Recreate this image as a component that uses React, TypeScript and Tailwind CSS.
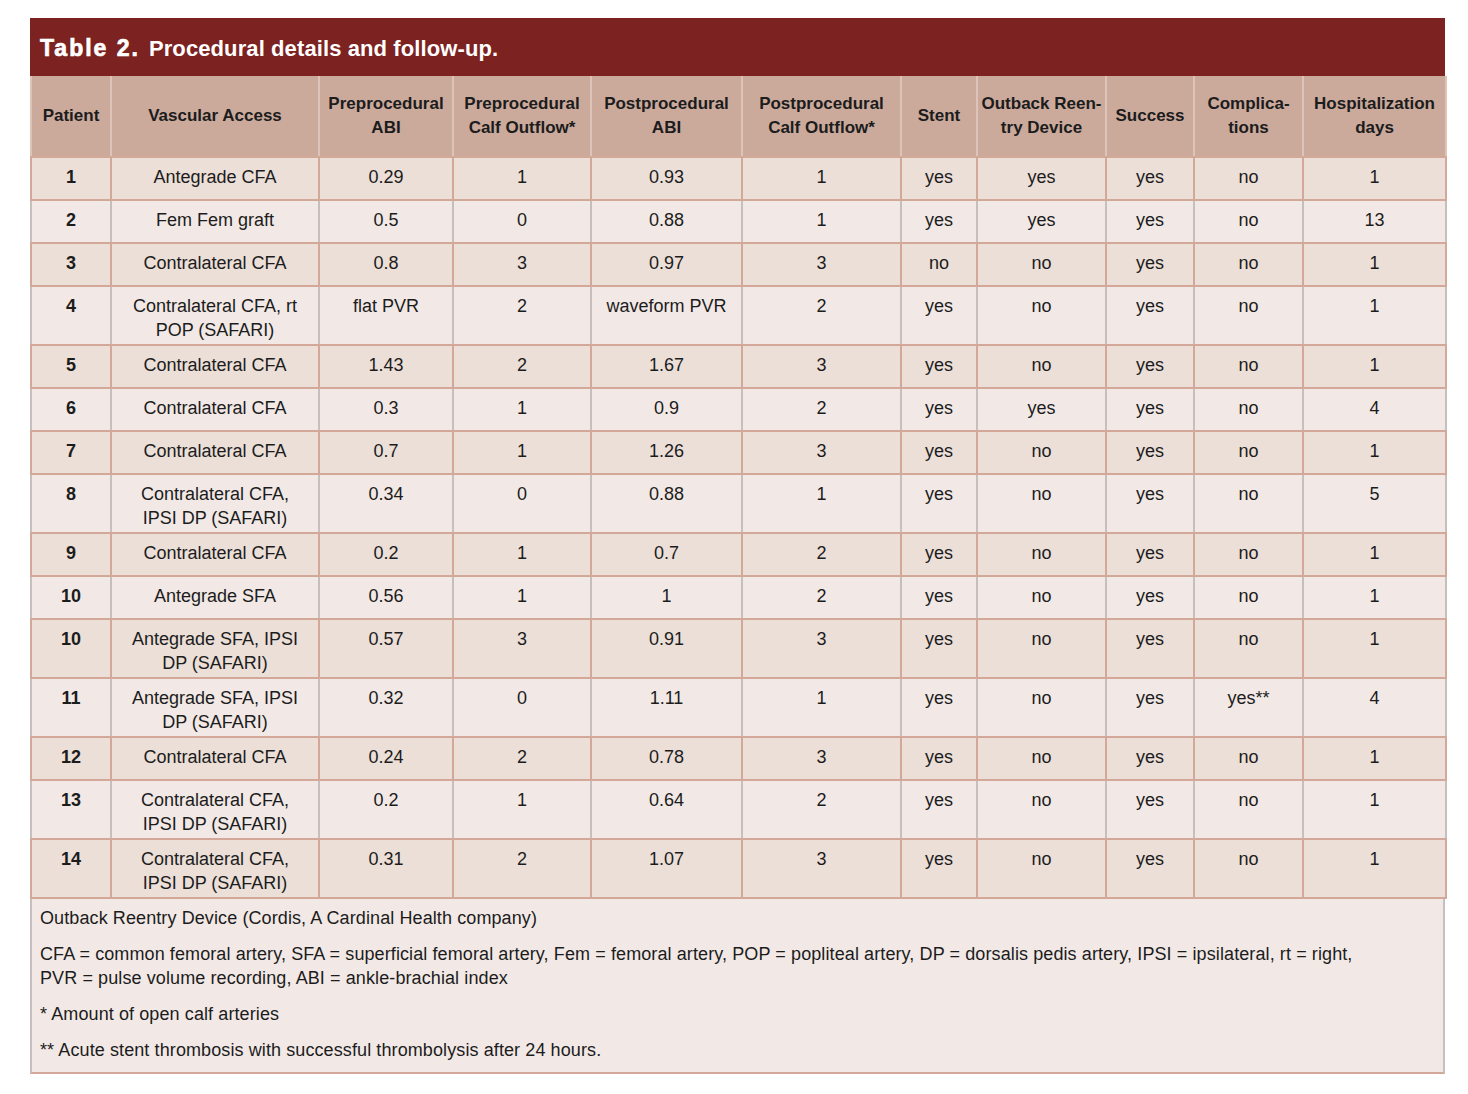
import React from "react";

type Row = {
  patient: string;
  access: string;
  preAbi: string;
  preCalf: string;
  postAbi: string;
  postCalf: string;
  stent: string;
  outback: string;
  success: string;
  comp: string;
  days: string;
  tall?: boolean;
};

const rows: Row[] = [
  { patient: "1", access: "Antegrade CFA", preAbi: "0.29", preCalf: "1", postAbi: "0.93", postCalf: "1", stent: "yes", outback: "yes", success: "yes", comp: "no", days: "1" },
  { patient: "2", access: "Fem Fem graft", preAbi: "0.5", preCalf: "0", postAbi: "0.88", postCalf: "1", stent: "yes", outback: "yes", success: "yes", comp: "no", days: "13" },
  { patient: "3", access: "Contralateral CFA", preAbi: "0.8", preCalf: "3", postAbi: "0.97", postCalf: "3", stent: "no", outback: "no", success: "yes", comp: "no", days: "1" },
  { patient: "4", access: "Contralateral CFA, rt\nPOP (SAFARI)", preAbi: "flat PVR", preCalf: "2", postAbi: "waveform PVR", postCalf: "2", stent: "yes", outback: "no", success: "yes", comp: "no", days: "1", tall: true },
  { patient: "5", access: "Contralateral CFA", preAbi: "1.43", preCalf: "2", postAbi: "1.67", postCalf: "3", stent: "yes", outback: "no", success: "yes", comp: "no", days: "1" },
  { patient: "6", access: "Contralateral CFA", preAbi: "0.3", preCalf: "1", postAbi: "0.9", postCalf: "2", stent: "yes", outback: "yes", success: "yes", comp: "no", days: "4" },
  { patient: "7", access: "Contralateral CFA", preAbi: "0.7", preCalf: "1", postAbi: "1.26", postCalf: "3", stent: "yes", outback: "no", success: "yes", comp: "no", days: "1" },
  { patient: "8", access: "Contralateral CFA,\nIPSI DP (SAFARI)", preAbi: "0.34", preCalf: "0", postAbi: "0.88", postCalf: "1", stent: "yes", outback: "no", success: "yes", comp: "no", days: "5", tall: true },
  { patient: "9", access: "Contralateral CFA", preAbi: "0.2", preCalf: "1", postAbi: "0.7", postCalf: "2", stent: "yes", outback: "no", success: "yes", comp: "no", days: "1" },
  { patient: "10", access: "Antegrade SFA", preAbi: "0.56", preCalf: "1", postAbi: "1", postCalf: "2", stent: "yes", outback: "no", success: "yes", comp: "no", days: "1" },
  { patient: "10", access: "Antegrade SFA, IPSI\nDP (SAFARI)", preAbi: "0.57", preCalf: "3", postAbi: "0.91", postCalf: "3", stent: "yes", outback: "no", success: "yes", comp: "no", days: "1", tall: true },
  { patient: "11", access: "Antegrade SFA, IPSI\nDP (SAFARI)", preAbi: "0.32", preCalf: "0", postAbi: "1.11", postCalf: "1", stent: "yes", outback: "no", success: "yes", comp: "yes**", days: "4", tall: true },
  { patient: "12", access: "Contralateral CFA", preAbi: "0.24", preCalf: "2", postAbi: "0.78", postCalf: "3", stent: "yes", outback: "no", success: "yes", comp: "no", days: "1" },
  { patient: "13", access: "Contralateral CFA,\nIPSI DP (SAFARI)", preAbi: "0.2", preCalf: "1", postAbi: "0.64", postCalf: "2", stent: "yes", outback: "no", success: "yes", comp: "no", days: "1", tall: true },
  { patient: "14", access: "Contralateral CFA,\nIPSI DP (SAFARI)", preAbi: "0.31", preCalf: "2", postAbi: "1.07", postCalf: "3", stent: "yes", outback: "no", success: "yes", comp: "no", days: "1", tall: true },
];

const widths = [80, 208, 134, 138, 151, 159, 76, 129, 88, 109, 143];

const headers: React.ReactNode[] = [
  "Patient",
  "Vascular Access",
  <>Preprocedural<br />ABI</>,
  <>Preprocedural<br />Calf Outflow*</>,
  <>Postprocedural<br />ABI</>,
  <>Postprocedural<br />Calf Outflow*</>,
  "Stent",
  <>Outback Reen-<br />try Device</>,
  "Success",
  <>Complica-<br />tions</>,
  <>Hospitalization<br />days</>,
];

export default function App() {
  return (
    <div className="min-h-screen bg-white pt-[18px] pl-[30px] text-[#1c1c1c]" style={{ fontFamily: '"Liberation Sans", Arial, sans-serif' }}>
      <div className="w-[1415px]">
        <div className="flex h-[58px] items-center bg-[#7c2220] px-[10px] pt-[2px] font-bold text-white">
          <span className="mr-[9px] text-[23px] tracking-[2px] [-webkit-text-stroke:0.7px_white]">Table 2.</span>
          <span className="text-[22px] tracking-[0.1px]">Procedural details and follow-up.</span>
        </div>
        <table className="w-[1415px] table-fixed border-collapse">
          <colgroup>
            {widths.map((w, i) => (
              <col key={i} style={{ width: w }} />
            ))}
          </colgroup>
          <thead>
            <tr className="h-[81px] bg-[#cbaa9c]">
              {headers.map((h, i) => (
                <th
                  key={i}
                  className="border-x-2 border-b-2 border-x-[#ddc3b8] border-b-[#d3a898] px-0 text-center align-middle text-[17px] leading-[24px] font-bold whitespace-nowrap"
                >
                  {h}
                </th>
              ))}
            </tr>
          </thead>
          <tbody>
            {rows.map((r, i) => {
              const odd = i % 2 === 0;
              const cells = [r.patient, r.access, r.preAbi, r.preCalf, r.postAbi, r.postCalf, r.stent, r.outback, r.success, r.comp, r.days];
              return (
                <tr key={i} className={`${r.tall ? "h-[59px]" : "h-[43px]"} ${odd ? "bg-[#ebdfd8]" : "bg-[#f2e9e6]"}`}>
                  {cells.map((c, j) => (
                    <td
                      key={j}
                      className={`border-x-2 border-b-2 border-b-[#d3a898] px-[6px] pt-[7px] text-center align-top text-[18px] leading-[24px] whitespace-pre-line ${
                        odd ? "border-x-[#d3a898]" : "border-x-[#c5c0bd]"
                      } ${j === 0 ? "font-bold" : ""}`}
                    >
                      {c}
                    </td>
                  ))}
                </tr>
              );
            })}
          </tbody>
        </table>
        <div className="flex flex-col gap-[12px] border-x-2 border-b-2 border-x-[#c5c0bd] border-b-[#d3a898] bg-[#f2e9e6] pt-[7px] pb-[10px] pl-[8px] text-[18px] leading-[24px] tracking-[0.1px]">
          <p>Outback Reentry Device (Cordis, A Cardinal Health company)</p>
          <p>
            CFA = common femoral artery, SFA = superficial femoral artery, Fem = femoral artery, POP = popliteal artery, DP = dorsalis pedis artery, IPSI = ipsilateral, rt = right,
            <br />
            PVR = pulse volume recording, ABI = ankle-brachial index
          </p>
          <p>* Amount of open calf arteries</p>
          <p>** Acute stent thrombosis with successful thrombolysis after 24 hours.</p>
        </div>
      </div>
    </div>
  );
}
